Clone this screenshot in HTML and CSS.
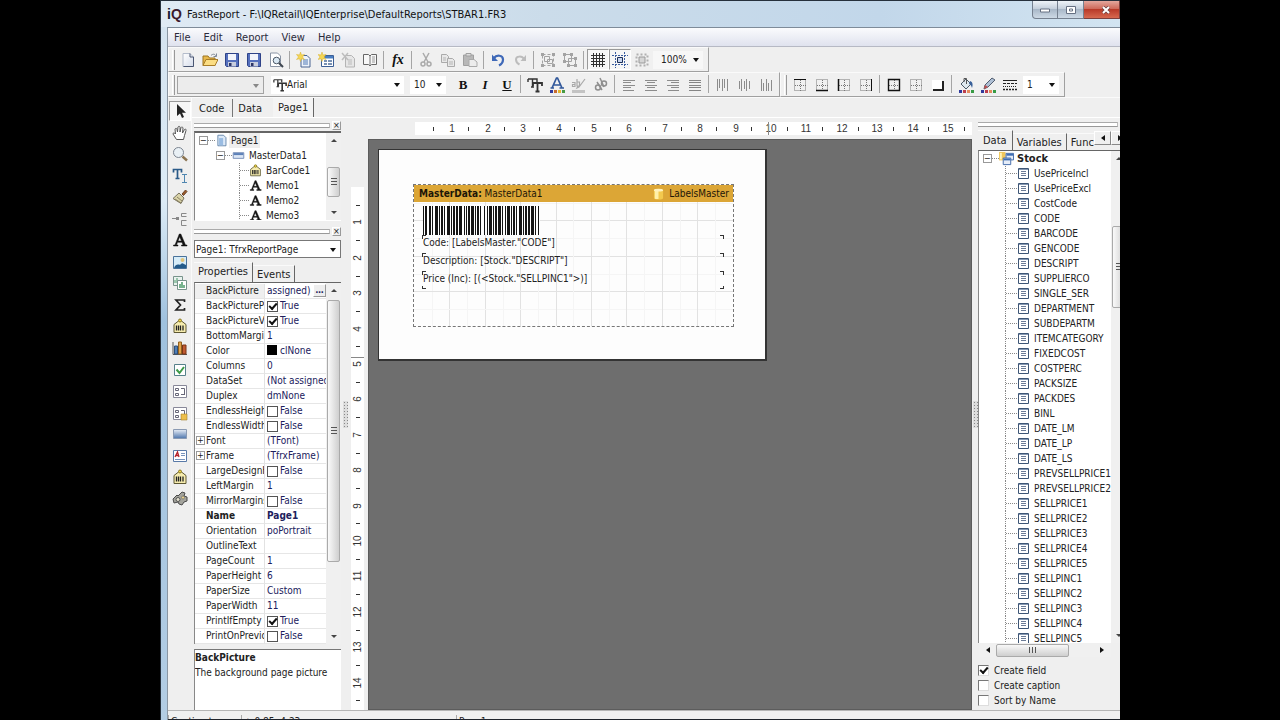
FILE: index.html
```html
<!DOCTYPE html>
<html lang="en">
<head>
<meta charset="utf-8">
<title>FastReport - STBAR1.FR3</title>
<link rel="stylesheet" href="styles.css">
</head>
<body>
<svg class="sprite" aria-hidden="true">
  <defs>
    <linearGradient id="g-page" x1="0" y1="0" x2="1" y2="1"><stop offset="0" stop-color="#fff"/><stop offset="1" stop-color="#d5dcea"/></linearGradient>
    <linearGradient id="g-blue" x1="0" y1="0" x2="0" y2="1"><stop offset="0" stop-color="#e8eef6"/><stop offset="1" stop-color="#4d75ac"/></linearGradient>
    <linearGradient id="g-gold" x1="0" y1="0" x2="1" y2="0"><stop offset="0" stop-color="#fff3b0"/><stop offset="1" stop-color="#e0a020"/></linearGradient>
  </defs>
  <symbol id="new" viewBox="0 0 16 16"><path d="M3 1.500h7l3.500 3.500v9.500H3z" fill="url(#g-page)" stroke="#b4bccb"/><path d="M10 1.500V5h3.500v9.500H3.500" fill="none" stroke="#4a5672"/></symbol>
  <symbol id="open" viewBox="0 0 16 16"><path d="M1 13.500V4h5l1.500 2H13v7.500z" fill="#e8b84a" stroke="#9c7420"/><path d="M1 13.500L4 7.500h12l-3 6z" fill="#fbdd83" stroke="#a87d28"/><path d="M9 3.500c2-2 4-1.500 5 .5M14.500 1.500v3h-3" fill="none" stroke="#7d8796"/></symbol>
  <symbol id="save" viewBox="0 0 16 16"><path d="M1.500 1.500h13v13h-12l-1-1z" fill="#5570bd" stroke="#2f4388"/><path d="M4 2h8v6H4z" fill="#f3f5fb"/><path d="M4 10h8v4.500H4z" fill="#c8cede"/><path d="M5 11h2.500v3H5z" fill="#2c3566"/></symbol>
  <symbol id="preview" viewBox="0 0 16 16"><path d="M2.500 1h7l3 3v10.500h-10z" fill="#fff" stroke="#8b95a5"/><circle cx="8.500" cy="8.500" r="3.300" fill="#d9e8f3" stroke="#4e5a68"/><path d="M11 11l4 4" stroke="#3e4650" stroke-width="2"/></symbol>
  <symbol id="addpage" viewBox="0 0 16 16"><path d="M5 3.500h6l3 3v8.500H5z" fill="#eef3fa" stroke="#4a6592"/><path d="M7 8h5M7 10h5M7 12h5" stroke="#4f79b5"/><path d="M4.500 0l1 3 3-.5-2 2.500 2 2.500-3-.8-1 2.800-1-2.800-3 .8 2-2.500L.500 2.500l3 .5z" fill="#f5d655" stroke="#d8b22e" stroke-width=".5"/></symbol>
  <symbol id="addform" viewBox="0 0 16 16"><path d="M3.500 3.500h12v11h-12z" fill="#fff" stroke="#3d6096"/><path d="M4 4h11v2.500H4z" fill="#4a7ec2"/><path d="M6 9h3M6 12h3M10 9h4M10 12h4" stroke="#4d6f9c" stroke-width="1.400"/><path d="M4 0l1 3 3-.5-2 2.500 2 2.500-3-.8-1 2.800-1-2.800-3 .8 2-2.500L0 2.500l3 .5z" fill="#f5d655" stroke="#d8b22e" stroke-width=".5"/></symbol>
  <symbol id="delpage" viewBox="0 0 16 16"><path d="M5.500 3.500h6l3 3v8.500h-9z" fill="#e6e6e6" stroke="#b4b4b4"/><path d="M8 8h4M8 10h4M8 12h4" stroke="#bbb"/><path d="M2 1l6 7M8 1L2 8" stroke="#bdbdbd" stroke-width="1.500"/></symbol>
  <symbol id="book" viewBox="0 0 16 16"><path d="M1.500 2.500h5L8 4l1.500-1.500h5v10h-5L8 14l-1.500-1.500h-5z" fill="#f7f7f7" stroke="#666"/><path d="M8 4v10" stroke="#777"/><path d="M10 4h3v7h-3z" fill="#c9c9c9"/></symbol>
  <symbol id="cut" viewBox="0 0 16 16"><path d="M5 1l5 9M11 1L6 10" stroke="#aaa" stroke-width="1.500"/><g fill="none" stroke="#aaa" stroke-width="1.500"><circle cx="5" cy="12" r="2"/><circle cx="11" cy="12" r="2"/></g></symbol>
  <symbol id="copy" viewBox="0 0 16 16"><g fill="#e8e8e8" stroke="#aaa"><path d="M1.500 2.500h5l2 2v6h-7z"/><path d="M7.500 6.500h5l2 2v6h-7z"/></g><path d="M3 6h3M3 8h3M9 10h4M9 12h4" stroke="#b5b5b5"/></symbol>
  <symbol id="paste" viewBox="0 0 16 16"><path d="M1.500 3h10v10.500h-10z" fill="#b8b8b8" stroke="#a0a0a0"/><path d="M4 1.500h5V4H4z" fill="#ddd" stroke="#a0a0a0"/><path d="M7 7.500h5l3 2.500v4.500H7z" fill="#ececec" stroke="#aaa"/></symbol>
  <symbol id="undo" viewBox="0 0 16 16"><path d="M4 6C6.500 2.500 13 3 13 7.500c0 3-2 5-4 6" fill="none" stroke="#3f69b8" stroke-width="2.200"/><path d="M2 2.500v6.500h6z" fill="#3f69b8"/></symbol>
  <symbol id="redo" viewBox="0 0 16 16"><path d="M12 7C10 3.500 4 4 4 7.500c0 2.500 1.500 4 3.500 5" fill="none" stroke="#bcbcbc" stroke-width="2"/><path d="M14 3v6H8.500z" fill="#bcbcbc"/></symbol>
  <symbol id="group" viewBox="0 0 16 16"><g fill="none" stroke="#a3a3a3"><path d="M2.500 2.500h11v11h-11z" stroke-dasharray="3 2"/><path d="M4.500 4.500h5v5h-5zM7.500 7.500h5v4h-5z"/></g><path d="M1 1h3v3H1zM12 1h3v3h-3zM1 12h3v3H1zM12 12h3v3h-3z" fill="#a3a3a3"/></symbol>
  <symbol id="ungroup" viewBox="0 0 16 16"><g fill="none" stroke="#a3a3a3"><path d="M2.500 2.500h7v7h-7zM6.500 6.500h7v7h-7z"/></g><path d="M1 1h3v3H1zM8 1h3v3H8zM1 8h3v3H1zM12 5h3v3h-3zM5 12h3v3H5zM12 12h3v3h-3z" fill="#a3a3a3"/></symbol>
  <symbol id="grid" viewBox="0 0 16 16"><path d="M3.500 1v14M6.500 1v14M9.500 1v14M12.500 1v14M1 3.500h14M1 6.500h14M1 9.500h14M1 12.500h14" stroke="#303030"/></symbol>
  <symbol id="snap" viewBox="0 0 16 16"><path d="M0 3.500h16M0 12.500h16M3.500 0v16M12.500 0v16" stroke="#3b5ea0" stroke-dasharray="2 1"/><path d="M5.500 5.500h5v5h-5z" fill="#c7d5ed" stroke="#1c2e58"/></symbol>
  <symbol id="fit" viewBox="0 0 16 16"><path d="M2.500 2.500h11v11h-11z" fill="none" stroke="#b0b0b0" stroke-width="2" stroke-dasharray="2 2"/><path d="M5 5h6v6H5z" fill="#d5d5d5" stroke="#999"/></symbol>
  <symbol id="tt" viewBox="0 0 16 16"><path d="M1 2h9v3M1 2v3M5.500 2v8M4 10h3" fill="none" stroke="#333" stroke-width="1.400"/><path d="M6 6h9v3M6 6v3M10.500 6v8.500M8.500 14.500h4" fill="none" stroke="#333" stroke-width="1.800"/></symbol>
  <symbol id="fcolor" viewBox="0 0 16 16"><path d="M3 11L7.500 1h1L13 11M5 8h6M1.500 11H5M10.500 11H15" fill="none" stroke="#31589b" stroke-width="1.700"/><path d="M1 13h3v3H1z" fill="#303a9d"/><path d="M5 13h3v3H5z" fill="#c86b30"/><path d="M9 13h3v3H9z" fill="#e5b52e"/><path d="M13 13h3v3h-3z" fill="#479b44"/></symbol>
  <symbol id="hilite" viewBox="0 0 16 16"><path d="M14 2L8 10l-2 1 1-2M1 5.500h3v4H1.500v-2H4M6 2v7h2.500V5H6" fill="none" stroke="#aaa" stroke-width="1.200"/><path d="M1 13h13v3H1z" fill="#c3c3c3"/></symbol>
  <symbol id="rotate" viewBox="0 0 16 16"><g fill="none" stroke="#8f8f8f" stroke-width="1.500"><circle cx="5" cy="10.500" r="2.500"/><circle cx="11" cy="6.500" r="2.500"/><path d="M4 5l5 8M7 1l4 9"/></g></symbol>
  <symbol id="al" viewBox="0 0 16 16"><path d="M2 3.500h12M2 5.500h8M2 8.500h12M2 10.500h8M2 13.500h11" stroke="#8c8c8c"/></symbol>
  <symbol id="ac" viewBox="0 0 16 16"><path d="M2 3.500h12M4 5.500h8M2 8.500h12M4 10.500h8M2 13.500h12" stroke="#8c8c8c"/></symbol>
  <symbol id="ar" viewBox="0 0 16 16"><path d="M2 3.500h12M6 5.500h8M2 8.500h12M6 10.500h8M3 13.500h11" stroke="#8c8c8c"/></symbol>
  <symbol id="aj" viewBox="0 0 16 16"><path d="M2 3.500h12M2 5.500h12M2 8.500h12M2 10.500h12M2 13.500h12" stroke="#858585"/></symbol>
  <symbol id="vt" viewBox="0 0 16 16"><path d="M2.500 2v12M4.500 2v9M7.500 2v12M9.500 2v9M12.500 2v12" stroke="#8c8c8c"/></symbol>
  <symbol id="vc" viewBox="0 0 16 16"><path d="M2.500 4v8M4.500 2v12M7.500 4v8M9.500 2v12M12.500 4v8" stroke="#8c8c8c"/></symbol>
  <symbol id="vb" viewBox="0 0 16 16"><path d="M2.500 2v12M4.500 6v8M7.500 2v12M9.500 6v8M12.500 3v11" stroke="#8c8c8c"/></symbol>
  <symbol id="fr" viewBox="0 0 16 16"><path d="M2.500 2.500h11v11h-11zM8.500 3v11M3 8.500h11" fill="none" stroke="#777" stroke-dasharray="1 1"/></symbol>
  <symbol id="ft" viewBox="0 0 16 16"><use href="#fr"/><path d="M2 2.500h12" stroke="#111"/></symbol>
  <symbol id="fb" viewBox="0 0 16 16"><use href="#fr"/><path d="M2 13.500h12" stroke="#111" stroke-width="1.500"/></symbol>
  <symbol id="fl" viewBox="0 0 16 16"><use href="#fr"/><path d="M2.500 2v12" stroke="#111" stroke-width="1.500"/></symbol>
  <symbol id="fg" viewBox="0 0 16 16"><use href="#fr"/><path d="M13.500 2v12" stroke="#111"/></symbol>
  <symbol id="fa" viewBox="0 0 16 16"><use href="#fr"/><path d="M2.500 2.500h11v11h-11z" fill="none" stroke="#111" stroke-width="1.400"/></symbol>
  <symbol id="shadow" viewBox="0 0 16 16"><path d="M2 3h10v9H2z" fill="#fff"/><path d="M3 13h10V4" fill="none" stroke="#222" stroke-width="2"/></symbol>
  <symbol id="dots4" viewBox="0 0 16 16"><path d="M1 13h3v3H1z" fill="#303a9d"/><path d="M5 13h3v3H5z" fill="#bd3e4d"/><path d="M9 13h3v3H9z" fill="#e58b5e"/><path d="M13 13h3v3h-3z" fill="#379b44"/></symbol>
  <symbol id="bucket" viewBox="0 0 16 16"><path d="M3 7l5-5 5 5-5 5z" fill="#dfe9ee" stroke="#4a5a68"/><path d="M6 5V1.500h2.500V7" fill="none" stroke="#555"/><path d="M12 4c3 1 3 4 2 7-1-3-2-4-3-4z" fill="#38609a"/><use href="#dots4"/></symbol>
  <symbol id="pen" viewBox="0 0 16 16"><path d="M12 1l3 2-7 7-4 2 1-4z" fill="#aebfd4" stroke="#515d70"/><path d="M5 8l3 2-4 2z" fill="#c24d4d"/><use href="#dots4"/></symbol>
  <symbol id="lines" viewBox="0 0 16 16"><path d="M1 3.500h14" stroke="#222"/><path d="M1 6.500h14" stroke="#222" stroke-dasharray="3 1"/><path d="M1 9.500h14" stroke="#222" stroke-dasharray="1 1"/><path d="M1 12.500h14" stroke="#222" stroke-width="1.500" stroke-dasharray="2 1"/></symbol>
  <symbol id="pointer" viewBox="0 0 16 16"><path d="M5 1v12l3-2.500 2 4.500 2-1-2-4.300h4z" fill="#222"/></symbol>
  <symbol id="hand" viewBox="0 0 16 16"><path d="M4.500 14.500L1 9c0-1.500 1.500-1.500 2.500 0L3 4c.5-1 1.800-1 2 .500L5.500 7 6 2c.5-1 2-1 2 .500V7l1-4.500c.5-1 1.800-.5 2 .500L10.500 8l2-3.500c1-.8 2 0 1.500 1l-1.500 5-1 4z" fill="#fff" stroke="#555"/></symbol>
  <symbol id="zoom" viewBox="0 0 16 16"><circle cx="6.500" cy="6.500" r="5" fill="#e9f0f5" stroke="#7b8490"/><path d="M10.500 10.500l4.500 4" stroke="#8a7350" stroke-width="2.500"/></symbol>
  <symbol id="textedit" viewBox="0 0 16 16"><path d="M1.500 4.500v-3h8v3M5.500 1.500v9M3.500 10.500h4" fill="none" stroke="#2a5a88" stroke-width="1.700"/><path d="M10 6.500h5M12.500 6.500v8M10 14.500h5" stroke="#4f86b0" fill="none"/></symbol>
  <symbol id="brush" viewBox="0 0 16 16"><path d="M10 5l3.500-4L15 2.500 11.500 6.500z" fill="#9b5b2c" stroke="#6b4428"/><path d="M7 4l5 5-3 5.500L1 9.500z" fill="#d9d3a8" stroke="#77715c"/><path d="M3 10l6 4M5 8l5 4" stroke="#8a8264"/></symbol>
  <symbol id="connect" viewBox="0 0 16 16"><path d="M0 7.500h6M14.500 2.500H9.500v3h5M14.500 9.500h-5v5h5" fill="none" stroke="#888"/><path d="M4 6h3v3H4z" fill="#888"/></symbol>
  <symbol id="memo" viewBox="0 0 16 16"><path d="M7.300 2h1.500l4.700 11H15v1H9.500v-1H11l-1-2.700H5.500L4.500 13H6v1H1.500v-1H3zM6 9h3.500L7.700 4.700z" fill="#111" stroke="#111" stroke-width=".5"/></symbol>
  <symbol id="image" viewBox="0 0 16 16"><path d="M1.500 2.500h13v12h-13z" fill="#d6ecf8" stroke="#49729a"/><path d="M2 14c2-6 6-2 7-4s3 0 5 1v3z" fill="#245b8a"/><circle cx="10.500" cy="6" r="2" fill="#e2c47a"/></symbol>
  <symbol id="sub" viewBox="0 0 16 16"><path d="M1.500 1.500h9v9h-9z" fill="#e9f2ee" stroke="#78938b"/><path d="M3 8V5M5 8V3" stroke="#4b9b6a"/><path d="M5.500 5.500h9v9h-9z" fill="#fff" stroke="#78938b"/><path d="M8 13V9M10 13V7M12 13v-3" stroke="#4b9b6a" stroke-width="1.500"/></symbol>
  <symbol id="sigma" viewBox="0 0 16 16"><path d="M12.500 5V3H4l4.500 5L4 13h8.500v-2" fill="none" stroke="#222" stroke-width="1.700"/></symbol>
  <symbol id="barcode" viewBox="0 0 16 16"><path d="M2 6.500L6.500 3h3L14 6.500v8H2z" fill="#f6ecae" stroke="#5d5733"/><circle cx="8" cy="2.500" r="1.500" fill="#f1d546" stroke="#8a7a2a"/><path d="M4.500 7.500v5M6.500 7.500v5M8.500 7.500v5M11 7.500v5" stroke="#222" stroke-width="1.300"/></symbol>
  <symbol id="chart" viewBox="0 0 16 16"><path d="M1 2v12.500h14" fill="none" stroke="#555"/><path d="M2.500 6h3v8h-3z" fill="#4f7fb8" stroke="#2e4f7a"/><path d="M6.500 2h3v12h-3z" fill="#e2a34b" stroke="#91601e"/><path d="M10.500 5h3.500v9h-3.500z" fill="#c05a31" stroke="#7a3517"/></symbol>
  <symbol id="tick" viewBox="0 0 16 16"><path d="M2.500 2.500h11v11h-11z" fill="#fff" stroke="#56818a"/><path d="M4.500 7.500l3 3.500 4.500-6" fill="none" stroke="#3d9a48" stroke-width="2"/></symbol>
  <symbol id="band" viewBox="0 0 16 16"><path d="M1.500 2.500h13v12h-13z" fill="#fff" stroke="#889"/><path d="M3.500 5.500h3v2h-3zM3.500 10.500h3v2h-3zM9 5.500h3.500v6M9 11.500h4" fill="none" stroke="#667"/></symbol>
  <symbol id="dbband" viewBox="0 0 16 16"><use href="#band"/><path d="M9 9h6v6H9z" fill="#eebf4c" stroke="#a3802c" stroke-width=".6"/></symbol>
  <symbol id="panel" viewBox="0 0 16 16"><path d="M1.500 3.500h13v9h-13z" fill="url(#g-blue)" stroke="#8a9ab3"/></symbol>
  <symbol id="rich" viewBox="0 0 16 16"><path d="M1.500 2.500h13v11h-13z" fill="#fff" stroke="#597aa8"/><path d="M3 9l2.500-5L7 9M4 7.500h2.500" fill="none" stroke="#b5222a" stroke-width="1.300"/><path d="M9 5.500h4M9 7.500h4M3 11.500h10" stroke="#7893bb"/></symbol>
  <symbol id="gears" viewBox="0 0 16 16"><path d="M1 8l4-4 1 1 4-4 3 1-1 3 3 1v4l-3 1-2 3-3-1-1-2-4 1z" fill="#a3a39c" stroke="#4b4b4b"/><circle cx="6" cy="8.500" r="2" fill="#e4e0cf" stroke="#555"/><circle cx="11" cy="6.500" r="1.500" fill="#e9d08a" stroke="#666" stroke-width=".6"/></symbol>
  <symbol id="pageblue" viewBox="0 0 16 16"><path d="M3.500 1.500h7l3 3v10h-10z" fill="#dce9f8" stroke="#53779f"/><path d="M5 5h5v9H5z" fill="#9abce2"/></symbol>
  <symbol id="masterband" viewBox="0 0 16 16"><path d="M1.500 4.500h13v7h-13z" fill="#dce6f5" stroke="#667fae"/><path d="M2 5h12v2.500H2z" fill="#5c80b8"/></symbol>
  <symbol id="field" viewBox="0 0 13 13"><path d="M1.500 1.500h10v10h-10z" fill="#fff" stroke="#3d5575"/><path d="M2 2h9v1H2z" fill="#8598b2"/><path d="M4 4.500h5M4 6.500h5M4 8.500h5" stroke="#6b7b96"/></symbol>
  <symbol id="dataset" viewBox="0 0 16 16"><path d="M0 1h7v9H0z" fill="#efc75d"/><path d="M1 2h2v7H1z" fill="#fff3b8"/><path d="M7.500 2.500h8v7h-8z" fill="#e6edf8" stroke="#4069a7"/><path d="M8 3h7v2H8z" fill="#3d6db5"/><path d="M4.500 7.500h8v7h-8z" fill="#e6edf8" stroke="#4069a7"/><path d="M5 8h7v2H5z" fill="#3d6db5"/></symbol>
  <symbol id="cyl" viewBox="0 0 12 13"><path d="M1 2v9c0 2 10 2 10 0V2z" fill="#f3c94e"/><path d="M2 3h4v9C3 12 2 12 2 11z" fill="#fff0a8"/><ellipse cx="6" cy="2.300" rx="5" ry="1.600" fill="#fff2bd"/></symbol>
</svg>

<div class="window">
  <header class="title-bar">
    <div class="logo"><b class="logo-i">i</b><b class="logo-q">Q</b></div>
    <h1 class="title">FastReport - F:\IQRetail\IQEnterprise\DefaultReports\STBAR1.FR3</h1>
    <div class="caption-buttons">
      <button class="cap" aria-label="Minimize"><svg viewBox="0 0 12 8"><path d="M1.500 3h9v3h-9z" fill="#fff" stroke="#667082"/></svg></button>
      <button class="cap" aria-label="Maximize"><svg viewBox="0 0 12 8"><path d="M1.500 .5h9v7h-9zM4.500 3h3v2h-3z" fill="#fff" stroke="#667082"/></svg></button>
      <button class="cap cap-close" aria-label="Close"><svg viewBox="0 0 12 8"><path d="M3 1l6 6M9 1L3 7" stroke="#6d4040" stroke-width="3.500"/><path d="M3 1l6 6M9 1L3 7" stroke="#fff" stroke-width="2"/></svg></button>
    </div>
  </header>

  <div class="client">
    <nav class="menu">
      <button>File</button><button>Edit</button><button>Report</button><button>View</button><button>Help</button>
    </nav>

    <div class="toolbar">
      <div class="bar" id="bar-standard"></div>
    </div>
    <div class="toolbar">
      <div class="bar">
        <i class="grip"></i>
        <label class="combo combo-style"><select aria-label="Style" disabled><option></option></select></label>
        <label class="combo combo-font"><svg class="icon"><use href="#tt"/></svg><select aria-label="Font"><option>Arial</option></select></label>
        <label class="combo combo-size"><select aria-label="Font size"><option>10</option></select></label>
        <div class="tool-run" id="bar-text"></div>
      </div>
      <div class="bar">
        <i class="grip"></i>
        <div class="tool-run" id="bar-frame"></div>
        <label class="combo combo-width"><select aria-label="Line width"><option>1</option></select></label>
      </div>
    </div>

    <div class="work">
      <div class="tools" id="tools"></div>
      <div class="stage">
        <div class="doc-tabs"><button>Code</button><button>Data</button><button class="active">Page1</button></div>
        <div class="panes">
          <aside class="left-pane">
            <div class="dock-head"><i></i><button aria-label="Close tree">×</button></div>
            <div class="tree-box">
              <ul class="tree">
                <li class="lv0"><span class="exp">−</span><i class="dots"></i><svg class="icon"><use href="#pageblue"/></svg><span class="sel">Page1</span></li>
                <li class="lv1"><span class="exp">−</span><i class="dots"></i><svg class="icon"><use href="#masterband"/></svg><span>MasterData1</span></li>
                <li class="lv2"><i class="dots"></i><svg class="icon"><use href="#barcode"/></svg><span>BarCode1</span></li>
                <li class="lv2"><i class="dots"></i><svg class="icon"><use href="#memo"/></svg><span>Memo1</span></li>
                <li class="lv2"><i class="dots"></i><svg class="icon"><use href="#memo"/></svg><span>Memo2</span></li>
                <li class="lv2"><i class="dots"></i><svg class="icon"><use href="#memo"/></svg><span>Memo3</span></li>
              </ul>
              <div class="vscroll"><i class="up"></i><i class="thumb thumb-tree"></i><i class="down"></i></div>
            </div>
            <div class="dock-head dock-second"><i></i><button aria-label="Close inspector">×</button></div>
            <label class="combo combo-object"><select aria-label="Object"><option>Page1: TfrxReportPage</option></select></label>
            <div class="tabs"><button class="active">Properties</button><button>Events</button></div>
            <div class="prop-box">
              <table class="props"><colgroup><col class="c-name"><col></colgroup><tbody id="props"></tbody></table>
              <div class="vscroll"><i class="up"></i><i class="thumb thumb-props"></i><i class="down"></i></div>
            </div>
            <div class="hint"><b>BackPicture</b><p>The background page picture</p></div>
          </aside>

          <div class="splitter"></div>

          <main class="designer">
            <div class="vruler"><svg id="vruler"></svg></div>
            <div class="sheet-area">
              <div class="hruler"><svg id="hruler"></svg></div>
              <div class="canvas">
                <div class="page">
                  <section class="report-band">
                    <div class="band-head"><span><b>MasterData:</b> MasterData1</span><span class="band-source"><svg class="icon"><use href="#cyl"/></svg>LabelsMaster</span></div>
                    <div class="band-body">
                      <svg class="band-grid" id="grid-lines"></svg>
                      <svg class="bars" id="bars"></svg>
                      <p class="memo memo-1">Code: [LabelsMaster."CODE"]</p>
                      <p class="memo memo-2">Description: [Stock."DESCRIPT"]</p>
                      <p class="memo memo-3">Price (Inc): [(&lt;Stock."SELLPINC1"&gt;)]</p>
                    </div>
                  </section>
                </div>
              </div>
            </div>
          </main>

          <div class="splitter splitter-right"></div>

          <aside class="right-pane">
            <div class="dock-head dock-right"><i></i></div>
            <div class="tabs tabs-right"><button class="active">Data</button><button>Variables</button><button>Func</button><span class="tab-scroll"><button aria-label="Scroll left"><i class="tri-l"></i></button><button aria-label="Scroll right"><i class="tri-r"></i></button></span></div>
            <div class="data-box">
              <ul class="tree data-tree" id="fields">
                <li class="root"><span class="exp">−</span><i class="dots"></i><svg class="icon"><use href="#dataset"/></svg><b>Stock</b></li>
              </ul>
              <div class="vscroll vscroll-data"><i class="up"></i><i class="thumb thumb-data"></i><i class="down"></i></div>
            </div>
            <div class="hscroll"><i class="tri-l"></i><i class="hthumb"></i><i class="tri-r"></i></div>
            <div class="options">
              <label><input type="checkbox" checked>Create field</label>
              <label><input type="checkbox">Create caption</label>
              <label><input type="checkbox">Sort by Name</label>
            </div>
          </aside>
        </div>
      </div>
    </div>

    <footer class="status"><span class="st-unit">Centimeters</span><span class="st-pos">⊹ 0.85; 4.23</span><span>Page1</span></footer>
  </div>
</div>
<script src="app.js"></script>
</body>
</html>
```

FILE: styles.css
```css
* { box-sizing: border-box; }
body { margin: 0; background: #000; color: #222; font: 10px/15px "DejaVu Sans Condensed", "DejaVu Sans", sans-serif; }
button, select, input { font: inherit; color: inherit; margin: 0; padding: 0; border: 0; background: none; border-radius: 0; }
ul, p, h1 { margin: 0; padding: 0; list-style: none; }
.sprite { position: absolute; width: 0; height: 0; }
.icon { width: 14px; height: 14px; flex: none; display: block; }

.window { margin: 0 12.5%; height: 100vh; min-height: 500px; overflow: hidden; display: flex; flex-direction: column; padding-left: 6px; border-left: 1px solid #26303c; border-top: 1px solid #26303c; background: linear-gradient(#d3e2ef, #dcebf6 200px, #9fc1de 320px, #b3cde4); }
.title-bar { height: 26px; flex: none; display: flex; align-items: center; margin-left: -6px; padding-left: 6px; background: linear-gradient(90deg, #dfeaf4, #cbdcea 40%, #c2d7ea 75%, #d2e4f1); }
.logo { font: bold 14px/16px "Liberation Sans", sans-serif; width: 20px; white-space: nowrap; }
.logo-i { color: #14182f; }
.logo-q { color: #3a1a2c; }
.title { font-size: 11px; font-weight: 400; color: #111; flex: 1; white-space: nowrap; }
.caption-buttons { display: flex; align-self: flex-start; }
.cap { width: 26px; height: 18px; border: 1px solid #75808f; border-top: 0; border-left-width: 0; background: linear-gradient(#eef3f8, #c5d0dc 45%, #a9b8c8 50%, #cdd9e5); display: grid; place-items: center; }
.cap:first-child { border-left-width: 1px; border-radius: 0 0 0 4px; }
.cap svg { width: 12px; height: 8px; }
.cap-close { width: 36px; background: linear-gradient(#e4a79d, #cf6a5b 45%, #b93a29 50%, #d7694f); border-color: #7d3f3c; padding-left: 8px; }

.client { flex: 1; min-height: 0; display: flex; flex-direction: column; background: #efefef; border-left: 1px solid #8a96a3; border-top: 1px solid #7e8b99; }
.menu { display: flex; flex: none; height: 19px; gap: 13px; padding-left: 6px; font-size: 11px; color: #2a2a3a; background: linear-gradient(#fafbfd, #dfe2ee); border-bottom: 1px solid #b6b9c4; }

.toolbar { flex: none; display: flex; height: 25px; }
.bar { display: flex; align-items: center; height: 25px; border: 1px solid #fafafa; border-right-color: #a0a0a0; border-bottom-color: #a0a0a0; background: #f0f0f0; padding: 0 1px 0 3px; }
.grip { width: 3px; height: 20px; border-left: 1px solid #fff; border-right: 1px solid #999; margin-right: 2px; }
.tool-run { display: flex; }
.tool { width: 22px; height: 21px; display: grid; place-items: center; }
.tool .icon { width: 16px; height: 16px; }
.tool.pressed { border: 1px solid #999; border-right-color: #fff; border-bottom-color: #fff; background: #f6f6f6; }
.glyph { font: bold 13px/15px "Liberation Serif", serif; color: #111; }
.glyph-i { font-style: italic; }
.glyph-u { text-decoration: underline; }
.glyph-fx { font-style: italic; font-size: 14px; }
.sep { width: 1px; height: 18px; margin: 1px 3px 0 2px; background: #a5a5a5; }

.combo { display: flex; align-items: center; position: relative; height: 18px; background: #fff; }
.combo select { appearance: none; flex: 1; min-width: 0; height: 100%; outline: 0; opacity: 1; }
.combo::after { content: ""; position: absolute; right: 4px; top: 7px; border: 3px solid transparent; border-top: 4px solid #111; border-bottom: 0; pointer-events: none; }
.combo-style { width: 87px; border: 1px solid #a3a3a3; background: #ececec; margin-right: 7px; }
.combo-style::after { border-top-color: #888; }
.combo-font { width: 133px; margin-right: 6px; padding-left: 2px; }
.combo-size { width: 36px; margin-right: 6px; padding-left: 4px; }
.combo-zoom { width: 50px; background: #f7f7f7; padding-left: 8px; margin-right: 4px; font-size: 10px; }
.combo-width { width: 36px; padding-left: 4px; margin: 0 4px 0 2px; }

.work { flex: 1; min-height: 0; display: flex; border-top: 1px solid #fafafa; }
.tools { width: 24px; flex: none; padding: 3px 0 0 1px; display: flex; flex-direction: column; height: 411px; justify-content: space-between; border-right: 1px solid #fafafa; }
.tools .tool { height: 20px; }
.stage { flex: 1; min-width: 0; display: flex; flex-direction: column; }
.doc-tabs { height: 20px; flex: none; display: flex; align-items: flex-end; font-size: 11px; border-bottom: 1px solid #fff; }
.doc-tabs button { height: 18px; padding: 0 8px 0 7px; line-height: 17px; border-right: 1px solid #777; }
.doc-tabs button + button { padding: 0 11px 0 5px; border-right: 0; }
.doc-tabs button.active { height: 19px; padding: 0 5px 1px; border-right: 1px solid #666; background: #f4f4f4; }
.panes { flex: 1; min-height: 0; display: flex; }

.left-pane { width: 149px; flex: none; padding: 1px 0 0 2px; display: flex; flex-direction: column; }
.dock-head { display: flex; flex: none; align-items: center; height: 12px; }
.dock-head i { flex: 1; height: 5px; border: 1px solid #bbb; border-left: 0; border-top-color: #aaa; border-bottom-color: #999; background: #fff; margin-right: 2px; }
.dock-head button { width: 9px; height: 9px; line-height: 7px; border: 1px solid #999; font-size: 9px; border-left-color: #fff; border-top-color: #fff; }
.tree-box { height: 90px; flex: none; display: flex; border-top: 2px solid #666; border-left: 1px solid #888; border-bottom: 1px solid #fff; background: #fff; overflow: hidden; }
.tree { flex: 1; min-width: 0; overflow: hidden; }
.tree li { display: flex; align-items: center; height: 15px; white-space: nowrap; font-size: 10px; }
.tree .icon { width: 13px; height: 13px; margin-right: 4px; }
.exp { width: 9px; height: 9px; border: 1px solid #999; font-size: 9px; line-height: 6px; text-align: center; flex: none; background: #fff; }
.dots { width: 7px; height: 1px; flex: none; border-top: 1px dotted #888; }
.sel { background: #eee; padding: 0 2px; }
.lv0 { padding-left: 4px; }
.lv1 { padding-left: 21px; }
.lv2 { margin-left: 44px; border-left: 1px dotted #888; }
.lv2 .dots { width: 9px; }
.tree .lv0 .icon { margin-right: 1px; }
.dock-second { margin: 4px 0 3px; }
.combo-object { flex: none; border: 1px solid #777; height: 18px; padding-left: 1px; }
.tabs { flex: none; height: 24px; display: flex; align-items: flex-end; font-size: 11px; }
.tabs button { height: 17px; line-height: 17px; padding: 0 4px; border-right: 1px solid #666; border-top: 1px solid #fafafa; }
.tabs button.active { height: 20px; padding: 0 4px 2px; }
.prop-box { flex: 1; min-height: 0; display: flex; background: #fff; border-top: 1px solid #666; border-left: 1px solid #888; overflow: hidden; align-items: flex-start; }
.prop-box .vscroll, .tree-box .vscroll { align-self: stretch; }
.props { flex: 1; width: 0; table-layout: fixed; border-spacing: 0; margin-top: 1px; }
.c-name { width: 70px; }
.props td { height: 15px; line-height: 14px; padding: 0; border-bottom: 1px solid #e6e6e6; white-space: nowrap; overflow: hidden; }
.props td:first-child { border-right: 1px solid #e2e2e2; padding-left: 11px; }
.props td.expandable { padding-left: 1px; }
.props td + td { color: #20205c; padding-left: 2px; }
.props tr:first-child td:first-child { background: #efefef; }
.props .exp { display: inline-block; margin-right: 1px; line-height: 7px; vertical-align: top; margin-top: 2px; }
.props label { display: flex; align-items: center; height: 14px; }
.props input, .options input { appearance: none; flex: none; width: 11px; height: 11px; border: 1px solid #555; background: #fff; display: grid; place-items: center; margin-right: 2px; }
input:checked::before { content: ""; width: 6px; height: 3px; border: solid #111; border-width: 0 0 2px 2px; transform: translateY(-1px) rotate(-48deg); }
.swatch { display: inline-block; width: 10px; height: 10px; background: #000; vertical-align: -1px; margin-right: 3px; }
.value-pick { display: flex; justify-content: space-between; height: 14px; }
.more { width: 13px; height: 13px; line-height: 7px; border: 1px solid #999; border-left-color: #fff; border-top-color: #fff; background: #eee; font-weight: 700; font-size: 9px; }
.bold { font-weight: 700; }
.hint { height: 61px; flex: none; margin-top: 5px; border-top: 1px solid #777; border-left: 1px solid #888; background: #fff; color: #222; overflow: hidden; white-space: nowrap; }

.vscroll { width: 15px; flex: none; background: #f0f0f0; display: flex; flex-direction: column; align-items: center; }
.up, .down { flex: none; border: 3px solid transparent; margin: 6px 0; }
.up { border-bottom: 3px solid #444; border-top: 0; }
.down { border-top: 3px solid #444; border-bottom: 0; margin-top: auto; }
.thumb, .hthumb { border: 1px solid #aaa; border-radius: 2px; flex: none; }
.thumb { width: 13px; background: repeating-linear-gradient(#555 0 1px, transparent 1px 3px) center/6px 8px no-repeat, linear-gradient(90deg, #fafafa, #cfcfcf); }
.thumb-tree { height: 30px; margin-top: 19px; }
.thumb-props { height: 262px; margin-top: 2px; }
.thumb-data { height: 82px; margin-top: 60px; }

.splitter { width: 9px; flex: none; display: grid; place-items: center; }
.splitter::after { content: ""; width: 5px; height: 27px; background: radial-gradient(circle, #888 0 1px, #ddd 1px) 0 0/3px 3px; }
.splitter-right { width: 6px; }

.designer { flex: 1; min-width: 0; display: flex; }
.vruler { width: 15px; flex: none; margin: 69px 3px 0 0; padding: 0 1px; background: #fff; background-clip: content-box; overflow: hidden; }
.vruler svg { display: block; width: 13px; height: 100%; }
.sheet-area { flex: 1; min-width: 0; display: flex; flex-direction: column; }
.hruler { height: 13px; flex: none; margin: 4px 0 4px 47px; background: #fff; }
.hruler svg { display: block; width: 100%; height: 13px; }
.hruler text, .vruler text { font: 10px "Liberation Sans", sans-serif; fill: #333; text-anchor: middle; }
.canvas { flex: 1; min-height: 0; background: #6e6e6e; border: 1px solid #5c5c5c; padding: 9px; overflow: hidden; }
.page { width: 389px; height: 212px; background: #fdfdfd; border: 1px solid #333; border-right-width: 2px; border-bottom-width: 2px; padding: 34px 0 0 34px; }
.report-band { width: 321px; height: 143px; border: 1px dashed #777; display: flex; flex-direction: column; }
.band-head { height: 17px; flex: none; display: flex; justify-content: space-between; padding: 0 4px 0 5px; line-height: 17px; background: #dca636; color: #1c1608; }
.band-source { display: flex; align-items: center; gap: 5px; }
.band-source .icon { width: 11px; height: 12px; }
.band-body { position: relative; flex: 1; }
.band-grid { position: absolute; inset: 0; width: 100%; height: 100%; }
.bars { position: absolute; left: 9px; top: 4px; width: 117px; height: 29px; }
.memo { position: absolute; left: 8px; right: 9px; height: 18px; padding-left: 1px; line-height: 15px; white-space: nowrap; background: linear-gradient(#333, #333) 0 0/4px 1px, linear-gradient(#333, #333) 0 0/1px 4px, linear-gradient(#333, #333) 100% 0/4px 1px, linear-gradient(#333, #333) 100% 0/1px 4px; background-repeat: no-repeat; }
.memo-1 { top: 33px; }
.memo-2 { top: 51px; }
.memo-3 { top: 69px; }
.memo-3::after { content: ""; position: absolute; left: 0; right: 0; bottom: 0; height: 3px; background: linear-gradient(#333, #333) 0 100%/4px 1px, linear-gradient(#333, #333) 0 0/1px 3px, linear-gradient(#333, #333) 100% 100%/4px 1px, linear-gradient(#333, #333) 100% 0/1px 3px; background-repeat: no-repeat; }

.right-pane { width: 142px; flex: none; display: flex; flex-direction: column; overflow: hidden; }
.tabs-right { height: 20px; position: relative; }
.tabs-right button.active { padding: 0 5px 1px; }
.tabs-right button:nth-child(3) { border-right: 0; }
.tab-scroll { position: absolute; right: -8px; top: 1px; display: flex; background: #efefef; }
.tab-scroll button { width: 17px; height: 14px; display: grid; place-items: center; padding: 0; border: 1px solid #888; border-top-color: #fff; border-left-color: #fff; }
.tri-l, .tri-r { flex: none; border: 3px solid transparent; }
.tri-l { border-right: 4px solid #111; border-left: 0; }
.tri-r { border-left: 4px solid #111; border-right: 0; }
.data-box { flex: 1; min-height: 0; display: flex; border-top: 1px solid #666; border-left: 1px solid #888; background: #fff; overflow: hidden; }
.data-tree .root { padding-left: 4px; }
.data-tree .root b { font-size: 11px; }
.data-tree .root .icon { width: 15px; height: 15px; margin-right: 3px; }
.data-tree .leaf { margin-left: 26px; border-left: 1px dotted #888; }
.data-tree .leaf .dots { width: 11px; }
.vscroll-data { margin-right: -6px; }
.hscroll { height: 14px; flex: none; margin: 0 9px 0 1px; display: flex; align-items: center; padding: 0 7px; background: #f0f0f0; }
.hscroll .tri-r { margin-left: auto; }
.hthumb { width: 73px; height: 13px; margin-left: 6px; background: repeating-linear-gradient(90deg, #555 0 1px, transparent 1px 3px) center/8px 6px no-repeat, linear-gradient(#f8f8f8, #cfcfcf); }
.options { flex: none; padding: 6px 0 2px; }
.options label { display: flex; align-items: center; height: 15px; }
.options input { margin-right: 5px; border-color: #777 #ddd #ddd #777; }

.status { flex: none; height: 10px; display: flex; overflow: hidden; border-top: 1px solid #b5b5b5; border-bottom: 1px solid #20242c; padding-top: 4px; background: #f0f0f0; }
.status span { border-left: 1px solid #aaa; padding-left: 2px; line-height: 13px; }
.st-unit { width: 73px; }
.st-pos { width: 215px; }
```

FILE: app.js
```js
const byId = (id) => document.getElementById(id);

// "|" is a separator, "!" marks a pressed button, "'" a letter button
const tool = (name) => {
  if (name === '|') return '<i class="sep"></i>';
  const pressed = name[0] === '!';
  const key = pressed ? name.slice(1) : name;
  const face = key[0] === "'"
    ? `<span class="glyph glyph-${key.slice(1).toLowerCase()}">${key.slice(1)}</span>`
    : `<svg class="icon"><use href="#${key}"/></svg>`;
  return `<button class="tool${pressed ? ' pressed' : ''}" aria-label="${key.replace("'", '')}">${face}</button>`;
};
const run = (list) => list.split(' ').map(tool).join('');

byId('bar-standard').innerHTML = '<i class="grip"></i>' +
  run("new open save save preview | addpage addform delpage book | 'fx | cut copy paste | undo redo | group ungroup | !grid !snap fit") +
  '<label class="combo combo-zoom"><select aria-label="Zoom"><option>100%</option></select></label>';
byId('bar-text').innerHTML = run("'B 'I 'U | tt fcolor hilite rotate | al ac ar aj | vt vc vb");
byId('bar-frame').innerHTML = run('ft fb fl fg | fa fr shadow | bucket pen lines');
byId('tools').innerHTML = run('!pointer hand zoom textedit brush connect memo image sub sigma barcode chart tick band dbband panel rich barcode gears');

const T = ['check', true], F = ['check', false];
const props = [
  ['BackPicture', 'assigned)'], ['BackPicturePrintable', T], ['BackPictureVisible', T], ['BottomMargin', '1'],
  ['Color', 'clNone'], ['Columns', '0'], ['DataSet', '(Not assigned)'], ['Duplex', 'dmNone'],
  ['EndlessHeight', F], ['EndlessWidth', F], ['Font', '(TFont)'], ['Frame', '(TfrxFrame)'],
  ['LargeDesignHeight', F], ['LeftMargin', '1'], ['MirrorMargins', F], ['Name', 'Page1'],
  ['Orientation', 'poPortrait'], ['OutlineText', ''], ['PageCount', '1'], ['PaperHeight', '6'],
  ['PaperSize', 'Custom'], ['PaperWidth', '11'], ['PrintIfEmpty', T], ['PrintOnPreviousPage', F],
];
byId('props').innerHTML = props.map(([name, value]) => {
  const expandable = name === 'Font' || name === 'Frame';
  let cell = value;
  if (Array.isArray(value)) cell = `<label><input type="checkbox"${value[1] ? ' checked' : ''}>${value[1] ? 'True' : 'False'}</label>`;
  if (name === 'Color') cell = '<i class="swatch"></i>' + value;
  if (name === 'BackPicture') cell = `<div class="value-pick"><span>${value}</span><button class="more" aria-label="Edit">…</button></div>`;
  return `<tr${name === 'Name' ? ' class="bold"' : ''}><td${expandable ? ' class="expandable"' : ''}>${expandable ? '<span class="exp">+</span>' : ''}${name}</td><td>${cell}</td></tr>`;
}).join('');

const fields = ('UsePriceIncl UsePriceExcl CostCode CODE BARCODE GENCODE DESCRIPT SUPPLIERCO SINGLE_SER DEPARTMENT SUBDEPARTM ' +
  'ITEMCATEGORY FIXEDCOST COSTPERC PACKSIZE PACKDES BINL DATE_LM DATE_LP DATE_LS PREVSELLPRICE1 PREVSELLPRICE2 ' +
  'SELLPRICE1 SELLPRICE2 SELLPRICE3 SELLPRICE4 SELLPRICE5 SELLPINC1 SELLPINC2 SELLPINC3 SELLPINC4 SELLPINC5').split(' ');
byId('fields').insertAdjacentHTML('beforeend', fields.map((f) =>
  `<li class="leaf"><i class="dots"></i><svg class="icon"><use href="#field"/></svg><span>${f}</span></li>`).join(''));

// one centimetre on screen
const CM = 35.4;
let h = '', v = '';
for (let n = 0; n < 16; n++) {
  const tick = Math.round(1 + CM * (n + 0.5)), num = Math.round(2 + CM * n);
  h += `<path d="M${tick - 1}.5 5v4" stroke="#333"/>`;
  v += `<path d="M5 ${tick - 1}.5h4" stroke="#333"/>`;
  if (n) {
    h += `<text x="${num}" y="10">${n}</text>`;
    v += `<text transform="translate(10 ${num - 2}) rotate(-90)">${n}</text>`;
  }
}
byId('hruler').innerHTML = h + '<path d="M353.5 0v13" stroke="#888"/>';
byId('vruler').innerHTML = v + '<path d="M0 170.5h13" stroke="#888"/>';

let lines = '';
for (let n = 1; n < 18; n++) {
  const p = Math.round(CM * n / 2), c = n % 2 ? '#f5f5f5' : '#e2e2e2';
  lines += `<path d="M${p}.5 0v130" stroke="${c}"/><path d="M0 ${p - 17}.5h320" stroke="${c}"/>`;
}
byId('grid-lines').innerHTML = lines;

// alternating bar and gap widths
const pattern = '1122211231112112311121213211112131112113121131112131121131112112311121213112111221';
let x = 0, bars = '<path d="M0 0h117v29H0z" fill="#fff"/>';
[...pattern].forEach((w, i) => {
  if (i % 2 === 0) bars += `<path d="M${x} 0h${w}v29h-${w}z" fill="#151515"/>`;
  x += +w;
});
byId('bars').innerHTML = bars;
```
